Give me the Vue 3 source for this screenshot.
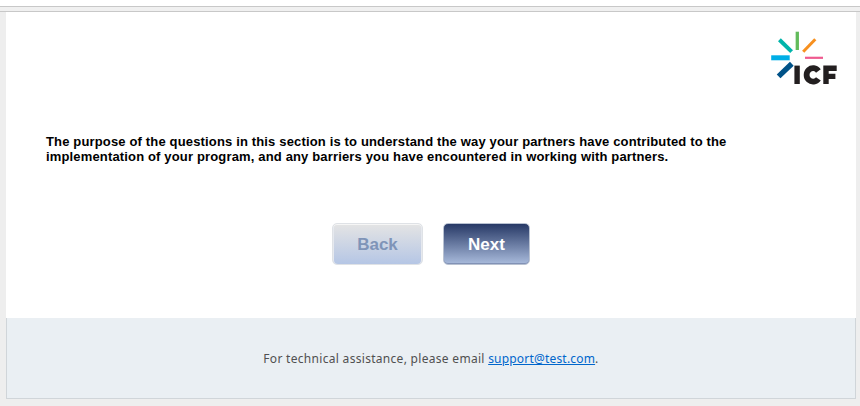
<script setup>
const lines = [
  'The purpose of the questions in this section is to understand the way your partners have contributed to the',
  'implementation of your program, and any barriers you have encountered in working with partners.',
]
</script>

<template>
  <div class="page">
    <div class="toolbar"></div>
    <div class="sheet">
      <header class="header">
        <svg class="logo" width="68" height="56" viewBox="0 0 68 56" role="img" aria-label="ICF">
          <g fill="none">
            <path d="M26.3 1.7V20" stroke="#62bb5b" stroke-width="3.3" />
            <path d="M8.4 9.8L20.6 21.6" stroke="#00b4aa" stroke-width="4" />
            <path d="M44.3 9.3L32.2 21.8" stroke="#f7901e" stroke-width="3" />
            <path d="M0.2 27.8H18.7" stroke="#00aee6" stroke-width="5" />
            <path d="M34 27.8H52" stroke="#ef5a8f" stroke-width="2.2" />
            <path d="M20.8 33.8L7.6 46.4" stroke="#005288" stroke-width="5.4" />
            <path d="M26.1 35.6V54" stroke="#231f20" stroke-width="5.4" />
            <path d="M47.4 41A6.5 6.7 0 1 0 47.4 48.8" stroke="#231f20" stroke-width="5.8" />
            <path d="M65.7 38.2H55V54M55 46.4H64.4" stroke="#231f20" stroke-width="5.4" />
          </g>
        </svg>
      </header>
      <p class="intro"><span v-for="line in lines" :key="line" class="line">{{ line }}</span></p>
      <div class="actions">
        <button class="btn back" type="button">Back</button>
        <button class="btn next" type="button">Next</button>
      </div>
    </div>
    <footer class="footer">
      <span class="help">For technical assistance, please email <a href="#">support@test.com</a>.</span>
    </footer>
  </div>
</template>

<style>
body { margin: 0; background: #eee; }
</style>

<style scoped>
.page { height: 406px; box-sizing: border-box; background: #eee; overflow: hidden; display: flex; flex-direction: column; }
.toolbar { flex: none; height: 4px; border-top: 1px solid #c8c8c8; border-bottom: 1px solid #c8c8c8; background: #f0f0f0; box-shadow: 0 -6px #fff; margin-top: 6px; }
.sheet { height: 306px; margin: 0 4px 0 6px; background: #fff; display: flex; flex-direction: column; }
.header { height: 122px; box-sizing: border-box; padding: 18px 17px 0 0; display: flex; justify-content: flex-end; }
.logo { display: block; }
.intro { margin: 0 0 0 40px; font: bold 13px/15px "Liberation Sans", Arial, sans-serif; letter-spacing: 0.156px; color: #000; }
.line { display: block; white-space: nowrap; }
.actions { display: flex; gap: 20px; margin: 59px 0 0 326px; }
.btn { height: 42px; box-sizing: border-box; border: 1px solid; border-radius: 5px; padding: 0; font: bold 17px/1 "Liberation Sans", Arial, sans-serif; }
.back { width: 91px; color: #7f94b8; border-color: #dfe2e6; background: linear-gradient(#e4e4e4, #b5c6e5); box-shadow: inset 0 1px #f6f6f6, inset 1px 0 #e6e9ef, inset -1px 0 #e6e9ef; }
.next { width: 87px; color: #fff; border-color: #b8c1d1; background: linear-gradient(#273966, #a9bbdc); box-shadow: inset 0 -1px #8292b6; }
.footer { height: 81px; box-sizing: border-box; margin: 0 4px 0 6px; padding-top: 2px; border: 1px solid #d0d5d9; border-top: 0; background: #eaeff3; display: flex; align-items: center; justify-content: center; }
.help { font: 12px/16px "Noto Sans", sans-serif; letter-spacing: 0.3px; color: #505050; white-space: nowrap; }
.help a { color: #06c; letter-spacing: 0.19px; text-decoration: underline; }
</style>
